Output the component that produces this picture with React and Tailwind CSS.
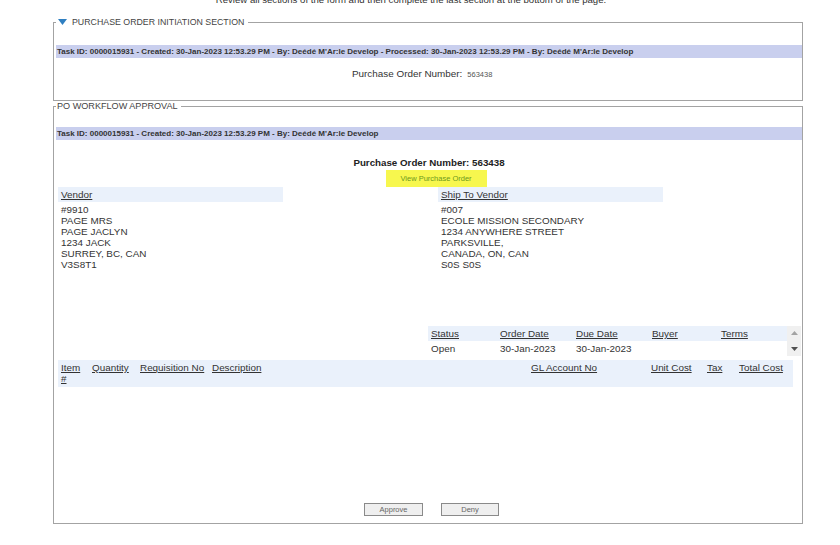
import React from 'react';

const taskText1 =
  "Task ID: 0000015931 - Created: 30-Jan-2023 12:53.29 PM - By: Deédé M'Ar:le Develop - Processed: 30-Jan-2023 12:53.29 PM - By: Deédé M'Ar:le Develop";
const taskText2 = "Task ID: 0000015931 - Created: 30-Jan-2023 12:53.29 PM - By: Deédé M'Ar:le Develop";

const vendor = ['#9910', 'PAGE MRS', 'PAGE JACLYN', '1234 JACK', 'SURREY, BC, CAN', 'V3S8T1'];
const shipTo = ['#007', 'ECOLE MISSION SECONDARY', '1234 ANYWHERE STREET', 'PARKSVILLE,', 'CANADA, ON, CAN', 'S0S S0S'];

function TaskBar({ text }) {
  return (
    <div className="h-[13px] bg-[#c9cfee] pl-[1px] text-[8px] font-bold leading-[13px] text-[#333] whitespace-nowrap">
      {text}
    </div>
  );
}

function AddressBlock({ title, lines, className }) {
  return (
    <div className={`w-[225px] ${className}`}>
      <div className="h-[15px] bg-[#eaf1fb] pl-[3px] leading-[15px]">
        <span className="underline">{title}</span>
      </div>
      <div className="pl-[3px] pt-[2px] leading-[11px]">
        {lines.map((l) => (
          <div key={l}>{l}</div>
        ))}
      </div>
    </div>
  );
}

export default function App() {
  return (
    <div className="w-[840px] h-[545px] overflow-hidden bg-white font-['Liberation_Sans',Arial,sans-serif] text-[9.9px] text-[#333]">
      <div className="w-[822px] text-center text-[9.6px] leading-[12px] -mt-[6px]">
        Review all sections of the form and then complete the last section at the bottom of the page.
      </div>

      {/* Initiation section */}
      <fieldset className="ml-[53px] mt-[10px] w-[750px] border border-[#a3a3a3] pl-[2px] pr-0 pb-[19px]">
        <legend className="flex items-center pl-[2px] pr-[4px] text-[8.8px] leading-[12px] text-[#444]">
          <svg width="9" height="6" viewBox="0 0 9 6" className="mr-[5px]">
            <path d="M0 0 H9 L4.5 6 Z" fill="#2f7fc1" />
          </svg>
          PURCHASE ORDER INITIATION SECTION
        </legend>
        <div className="mt-[17px]">
          <TaskBar text={taskText1} />
        </div>
        <div className="mt-[10px] flex items-baseline pl-[296px] leading-[12px]">
          <span>Purchase Order Number:</span>
          <span className="ml-[5px] text-[7.5px] text-[#555]">563438</span>
        </div>
      </fieldset>

      {/* Workflow approval */}
      <fieldset className="ml-[53px] -mt-[1px] w-[750px] border border-[#a3a3a3] pl-[2px] pr-0 pb-[7px]">
        <legend className="pl-[1px] pr-[3px] text-[9.1px] leading-[12px] text-[#444]">PO WORKFLOW APPROVAL</legend>
        <div className="mt-[15px]">
          <TaskBar text={taskText2} />
        </div>

        <div className="mt-[17px] text-center text-[9.75px] font-bold leading-[12px] text-[#222]">
          Purchase Order Number: 563438
        </div>
        <div className="mt-[1px] flex justify-center pl-[14px]">
          <div className="h-[17px] w-[101px] bg-[#f7f74e] text-center text-[7.5px] leading-[17px] text-[#6d9a1c]">
            View Purchase Order
          </div>
        </div>

        <div className="flex">
          <AddressBlock title="Vendor" lines={vendor} className="ml-[2px]" />
          <AddressBlock title="Ship To Vendor" lines={shipTo} className="ml-[155px]" />
        </div>

        {/* Status table */}
        <div className="mt-[56px] ml-[372px] flex">
          <div className="w-[359px]">
            <div className="flex h-[15px] bg-[#eaf1fb] leading-[15px]">
              <span className="ml-[3px] w-[69px] underline">Status</span>
              <span className="w-[76px] underline">Order Date</span>
              <span className="w-[76px] underline">Due Date</span>
              <span className="w-[69px] underline">Buyer</span>
              <span className="underline">Terms</span>
            </div>
            <div className="flex h-[15px] leading-[15px]">
              <span className="ml-[3px] w-[69px]">Open</span>
              <span className="w-[76px]">30-Jan-2023</span>
              <span className="w-[76px]">30-Jan-2023</span>
            </div>
          </div>
          <div className="flex h-[30px] w-[14px] flex-col items-center justify-between bg-[#f0f0f0] py-[5px]">
            <svg width="7" height="4" viewBox="0 0 7 4">
              <path d="M0 4 L3.5 0 L7 4 Z" fill="#a3a3a3" />
            </svg>
            <svg width="7" height="4" viewBox="0 0 7 4">
              <path d="M0 0 L7 0 L3.5 4 Z" fill="#505050" />
            </svg>
          </div>
        </div>

        {/* Items header */}
        <div className="mt-[4px] ml-[2px] flex h-[27px] w-[735px] bg-[#eaf1fb] pl-[3px] pt-[2px] leading-[11px]">
          <span className="w-[31px] underline">
            Item
            <br />#
          </span>
          <span className="w-[48px]"><span className="underline">Quantity</span></span>
          <span className="w-[72px]"><span className="underline">Requisition No</span></span>
          <span className="w-[319px]"><span className="underline">Description</span></span>
          <span className="w-[120px]"><span className="underline">GL Account No</span></span>
          <span className="w-[56px]"><span className="underline">Unit Cost</span></span>
          <span className="w-[32px]"><span className="underline">Tax</span></span>
          <span><span className="underline">Total Cost</span></span>
        </div>

        <div className="mt-[116px] ml-[308px] flex gap-[18px]">
          <button className="h-[13px] w-[59px] border border-[#8a8a8a] bg-[#efefef] text-[7.5px] leading-[11px] text-[#666]">
            Approve
          </button>
          <button className="h-[13px] w-[58px] border border-[#8a8a8a] bg-[#efefef] text-[7.5px] leading-[11px] text-[#666]">
            Deny
          </button>
        </div>
      </fieldset>
    </div>
  );
}
